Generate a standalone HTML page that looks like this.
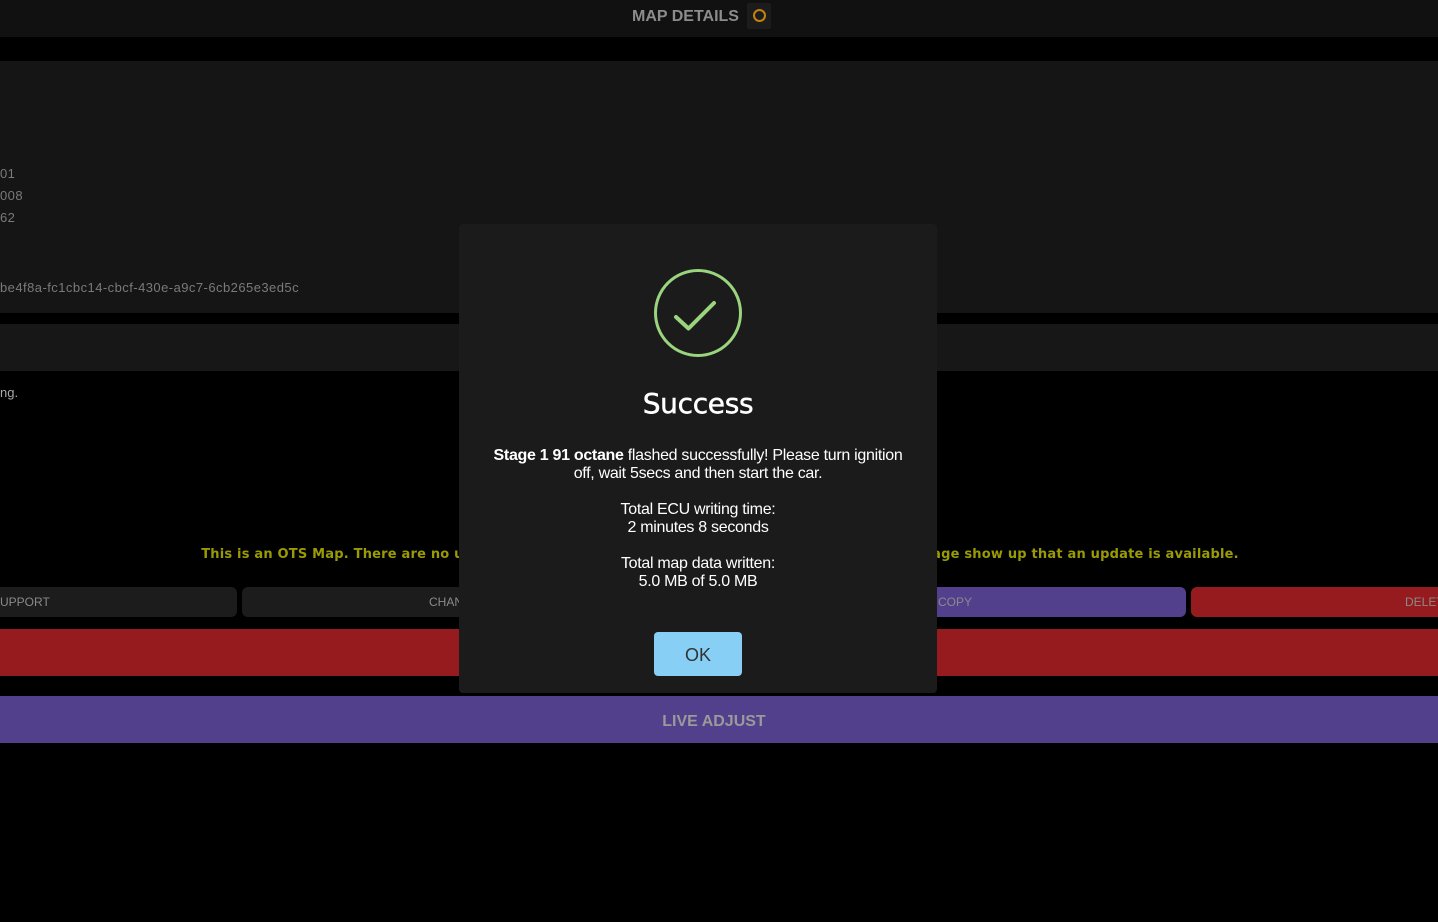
<!DOCTYPE html>
<html><head><meta charset="utf-8"><style>
*{margin:0;padding:0;box-sizing:border-box}
body{width:1438px;height:922px;background:#000;position:relative;overflow:hidden;font-family:"Liberation Sans",sans-serif}
.a{position:absolute}
.t{color:#7a7a7a;font-size:13px;line-height:16px;letter-spacing:0.45px}
.btn{position:absolute;top:587px;height:30px;border-radius:6px;background:#1c1c1c;color:#8a8a8a;font-size:12px;line-height:31px}
</style></head><body>
<div class="a" style="left:0;top:0;width:1438px;height:37px;background:#111"></div>
<div class="a" style="left:632px;top:7px;font-size:16px;font-weight:bold;color:#8c8c8c;line-height:20px">MAP DETAILS</div>
<div class="a" style="left:747px;top:3px;width:24px;height:26px;background:#1c1c1c;border-radius:2px"></div>
<div class="a" style="left:753px;top:9px;width:13px;height:13px;border:2px solid #c4820e;border-radius:50%"></div>

<div class="a" style="left:0;top:61px;width:1438px;height:252px;background:#151515"></div>
<div class="a t" style="left:0;top:166px">01</div>
<div class="a t" style="left:0;top:188px">008</div>
<div class="a t" style="left:0;top:210px">62</div>
<div class="a t" style="left:0;top:280px">be4f8a-fc1cbc14-cbcf-430e-a9c7-6cb265e3ed5c</div>
<div class="a" style="left:0;top:324px;width:1438px;height:47px;background:#171717"></div>
<div class="a" style="left:0;top:385px;color:#aaa;font-size:13px">ng.</div>

<div class="a" style="left:0;top:547px;width:1438px;text-align:center;color:#9a9a06;font-size:13px;font-weight:bold;line-height:16px;font-family:'DejaVu Sans',sans-serif;letter-spacing:0.2px;padding-left:2px">This is an OTS Map. There are no updates for this map. Should a new version be released a message show up that an update is available.</div>

<div class="btn" style="left:-10px;width:247px;padding-left:10px">UPPORT</div>
<div class="btn" style="left:242px;width:245px"><span style="position:absolute;left:187px">CHANGE</span></div>
<div class="btn" style="left:492px;width:222px"></div>
<div class="btn" style="left:719px;width:218px"></div>
<div class="btn" style="left:930px;width:256px;background:#52408c;padding-left:8px">COPY</div>
<div class="btn" style="left:1191px;width:260px;background:#961b1e;padding-left:214px">DELETE</div>
<div class="a" style="left:0;top:629px;width:1438px;height:47px;background:#961b1e"></div>
<div class="a" style="left:0;top:696px;width:1438px;height:47px;background:#52408c;color:#9a9a9a;font-weight:bold;font-size:16px;line-height:51px;text-align:center;padding-right:10px">LIVE ADJUST</div>

<div class="a" style="left:459px;top:224px;width:478px;height:469px;background:#1b1b1b;border-radius:4px"></div>
<svg class="a" style="left:650px;top:265px" width="96" height="96" viewBox="0 0 96 96"><circle cx="48" cy="48" r="42.5" fill="none" stroke="#9ad47f" stroke-width="3"/><path d="M26 52 L38.5 63.5 L64 38" fill="none" stroke="#9ad47f" stroke-width="4" stroke-linecap="round" stroke-linejoin="round"/></svg>
<div class="a" style="left:459px;top:386px;width:478px;text-align:center;color:#fff;font-size:28px;font-family:'DejaVu Sans',sans-serif;-webkit-text-stroke:0.5px #fff;letter-spacing:-0.3px;line-height:36px">Success</div>
<div class="a" style="left:484px;top:447px;width:428px;text-align:center;color:#fff;font-size:16px;line-height:18px;letter-spacing:-0.3px"><b>Stage 1 91 octane</b> flashed successfully! Please turn ignition off, wait 5secs and then start the car.</div>
<div class="a" style="left:459px;top:501px;width:478px;text-align:center;color:#fff;font-size:16px;line-height:18px;letter-spacing:-0.3px">Total ECU writing time:<br>2 minutes 8 seconds</div>
<div class="a" style="left:459px;top:555px;width:478px;text-align:center;color:#fff;font-size:16px;line-height:18px;letter-spacing:-0.3px">Total map data written:<br>5.0 MB of 5.0 MB</div>
<div class="a" style="left:654px;top:632px;width:88px;height:44px;background:#87cff5;border-radius:4px;color:#333;font-size:18px;line-height:46px;text-align:center">OK</div>
</body></html>
